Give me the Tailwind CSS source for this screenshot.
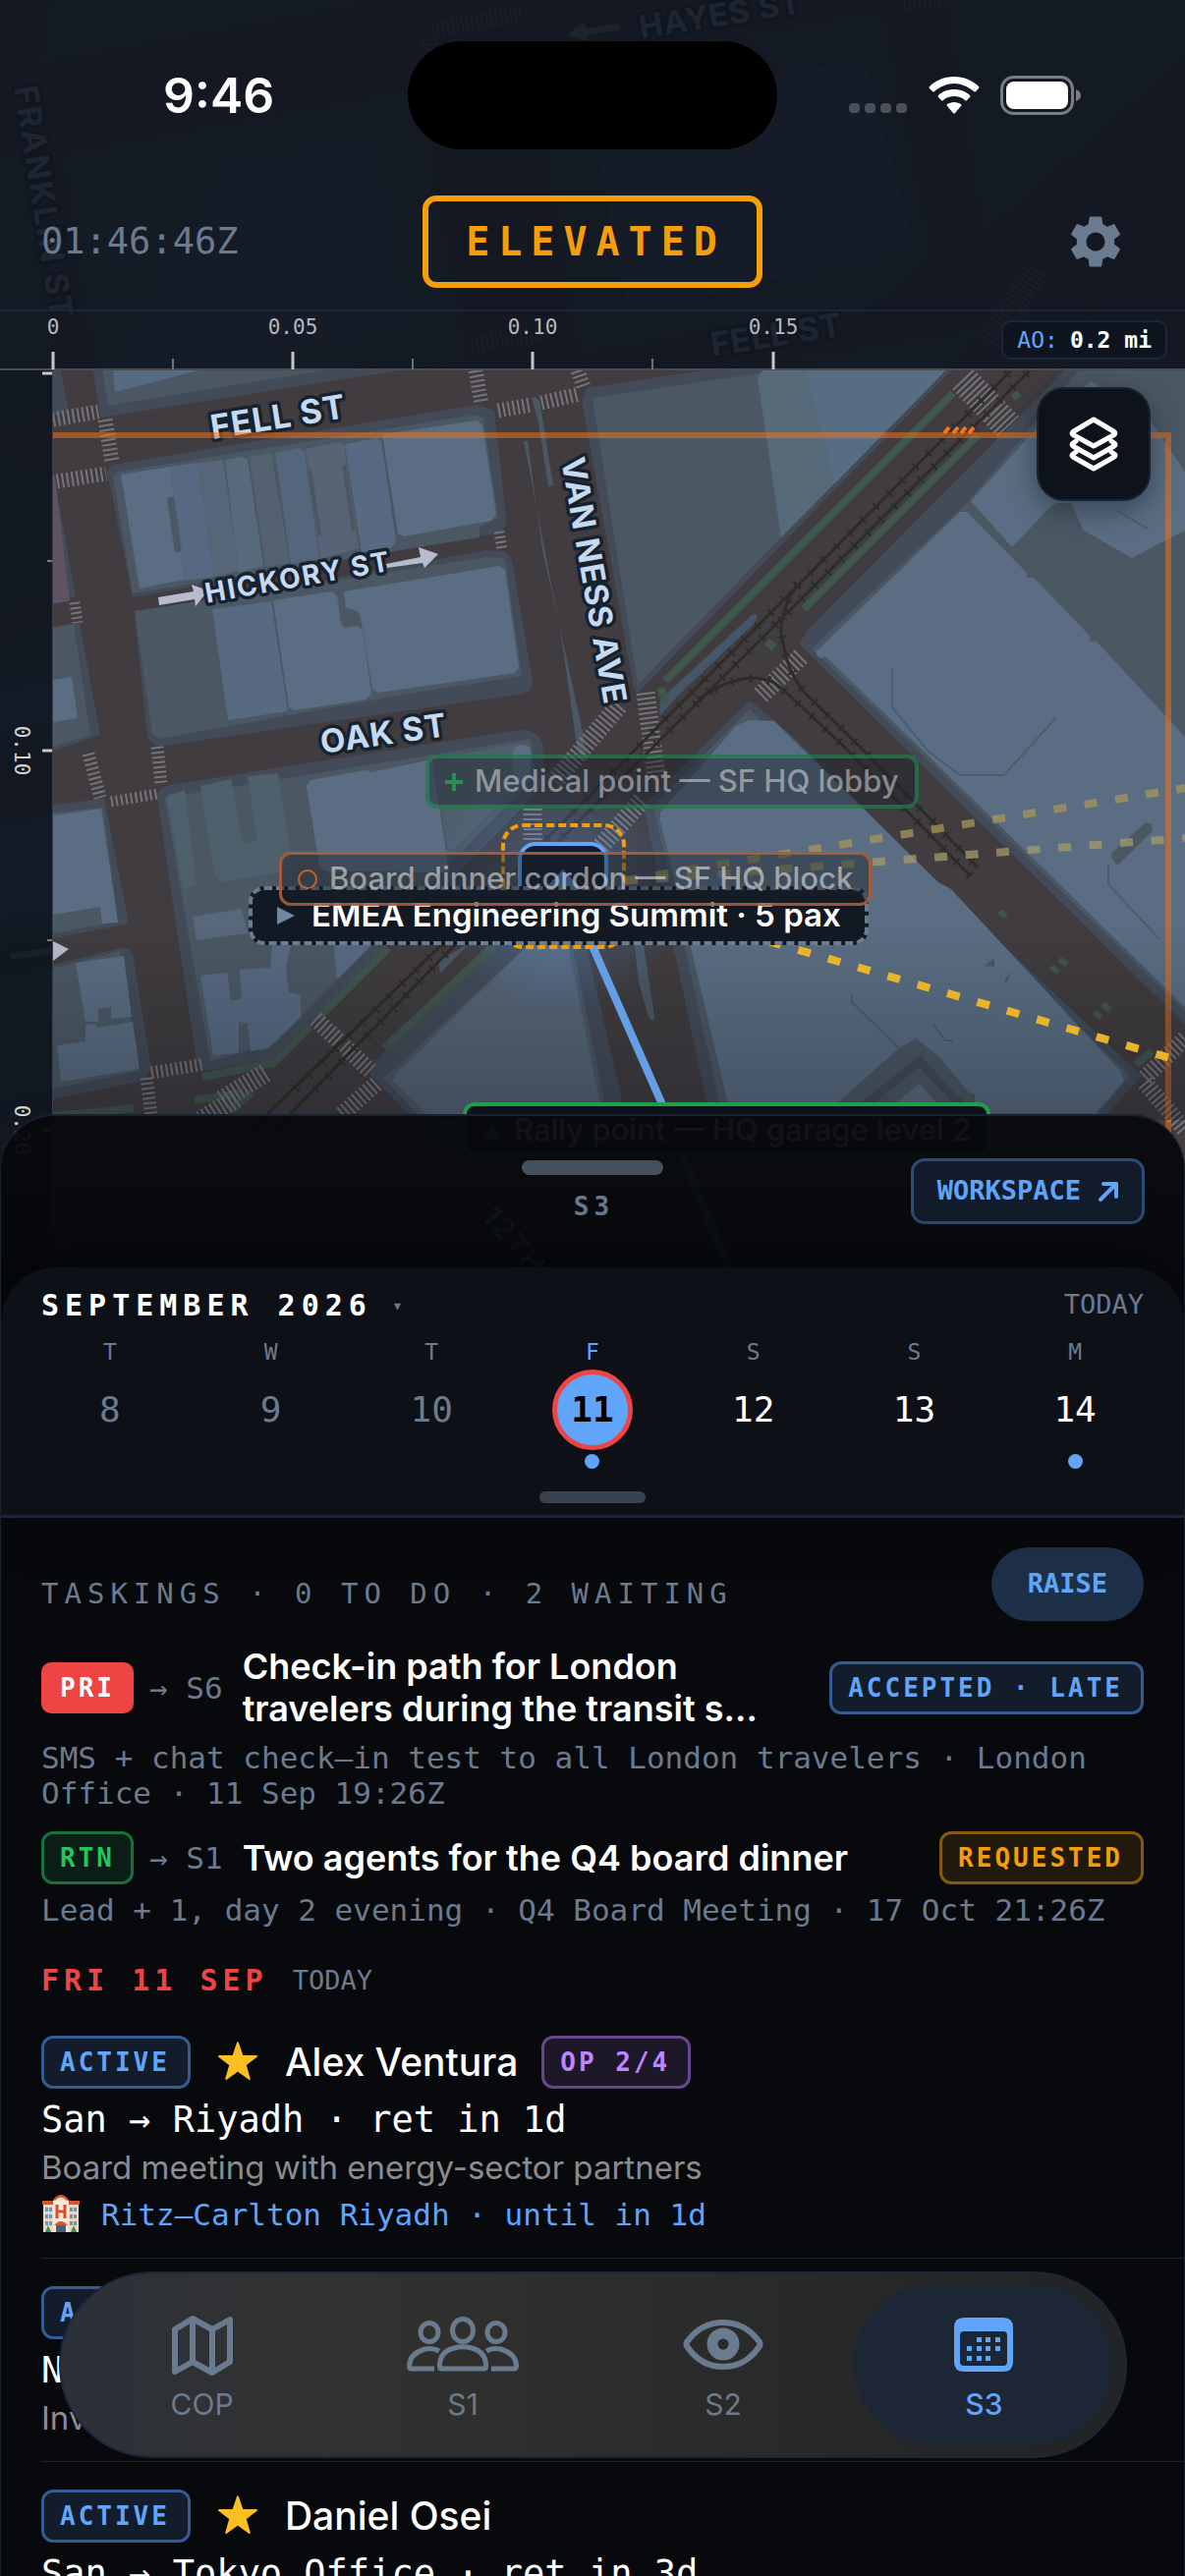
<!DOCTYPE html>
<html lang="en">
<head>
    <meta charset="UTF-8">
    <meta name="viewport" content="width=device-width, initial-scale=1.0">
    <title>S3 Taskings</title>
    <script src="https://cdn.jsdelivr.net/npm/@tailwindcss/browser@4"></script>
</head>
<body class="relative flex h-screen flex-col overflow-hidden bg-[#07090d] font-['Inter',sans-serif] text-white">

    <!-- Map canvas, runs behind the header and the sheet -->
    <div class="absolute inset-x-0 top-0 h-[1310px] overflow-hidden bg-[#403c3f]">
        <svg class="h-full w-full" viewBox="0 0 1206 1310" preserveAspectRatio="xMinYMin slice">
            <defs>
                <linearGradient id="fade" x1="0" y1="0" x2="0" y2="1">
                    <stop offset="0" stop-color="#0b1017" stop-opacity="0"/>
                    <stop offset="1" stop-color="#0b1017" stop-opacity=".28"/>
                </linearGradient>
                <radialGradient id="glow">
                    <stop offset="0" stop-color="#60a5fa" stop-opacity=".35"/>
                    <stop offset="1" stop-color="#60a5fa" stop-opacity="0"/>
                </radialGradient>
            </defs>
            <rect width="1206" height="1310" fill="#403c3f"/>

            <!-- Sidewalks -->
            <g fill="#434b58">
                <path d="M50 0H400L40 66Z"/>
                <path d="M62 155L430 88L476 366L102 425Z"/>
                <path d="M540 75L900 8L950 260L900 308L588 362Z"/>
                <path d="M960 0H1206V60L1000 240Z"/>
                <path d="M0 160L20 157L70 420L0 432Z"/>
                <path d="M0 465L54 478L77 608L0 622Z"/>
                <path d="M0 648L81 634L102 748L0 783Z"/>
                <path d="M0 824L81 816L106 812L131 940L0 966Z"/>
                <path d="M0 995L127 964L135 970L154 1088L146 1100L0 1130Z"/>
                <path d="M109 480L115 473L485 412L503 418L516 533L510 542L135 608Z"/>
                <path d="M137 625L496 560L514 561L521 570L542 693Q542 706 527 707L158 760L150 750Z"/>
                <path d="M597 395L1003 333L968 377L649 705L645 700L592 408Z"/>
                <path d="M160 812Q160 802 172 799L528 743Q548 743 552 757L556 797L280 1078L208 1090L200 1080Z"/>
                <path d="M1084 377H1206V1043L905 746L813 655L825 638Z"/>
                <path d="M763 713L810 752L955 900L1162 1095L1125 1136H722L655 820Z"/>
                <path d="M540 930L377 1085V1094L450 1170H645L590 935Z"/>
            </g>
            <!-- Blocks -->
            <g fill="#4b5864">
                <path d="M72 163L420 100L464 355L110 413Z"/>
                <path d="M0 648L75 635L92 748L0 778Z"/>
                <path d="M0 832L105 822L120 938L0 960Z"/>
                <path d="M0 1000L122 968L142 1090L0 1120Z"/>
                <path d="M115 485L121 480L484 422L492 426L507 527L488 536V547L135 604Z"/>
                <path d="M137 622L496 567L514 569L531 688L411 707L162 752L155 748Z"/>
                <path d="M603 405L975 350L960 377L649 697Z"/>
                <path d="M168 812L540 752L545 790L280 1062L214 1080Z"/>
                <path d="M1098 377H1206V1030L920 750L826 660L984 512Z"/>
                <path d="M550 950L390 1098L460 1170H625L580 950Z"/>
                <path d="M763 722L1150 1095L1115 1136H735L665 820Z"/>
            </g>
            <path d="M0 485H56L71 612L0 622Z" fill="#5f5262"/>
            <!-- Buildings -->
            <g fill="#5a6d82">
                <path d="M115 377L240 160L380 150L410 330L300 352L117 399Z" fill="#546b83"/>
                <path d="M600 110L880 60L930 250L640 320Z" fill="#546b83"/>
                <path d="M123 483L173 475L188 590L142 599Z"/>
                <path d="M173 475L201 471L218 587L188 591Z" fill="#576883"/>
                <path d="M201 471L227 468L243 581L218 587Z" fill="#576579"/>
                <path d="M229 468L247 465L252 468L268 576L243 583Z" fill="#576a7b"/>
                <path d="M254 465L276 461L295 573L270 577Z" fill="#536170"/>
                <path d="M280 461L305 456L310 460L325 569L296 574Z" fill="#54667c"/>
                <path d="M311 457L345 450L350 453L365 558L326 569Z" fill="#586475"/>
                <path d="M351 452L383 446L388 450L403 551L398 558L368 562Z" fill="#586a83"/>
                <path d="M389 442L485 428L491 432L505 524L500 530L411 546L405 543Z"/>
                <path d="M216 620L276 612L293 724L232 733Z" fill="#586a82"/>
                <path d="M278 611L338 602L343 606L347 634L350 639L364 637L369 641L378 706L372 712L300 723L294 720Z"/>
                <path d="M350 602L508 576L514 580L528 680L523 685L385 705L379 701L369 641L366 624L360 621L352 618Z"/>
                <path d="M771 384L776 377H962L950 390L795 547Z" fill="#576a7a"/>
                <path d="M820 377H962L850 492Z" fill="#55708b" opacity=".6"/>
                <path d="M0 700L73 689L79 731L0 744Z"/>
                <path d="M0 838L103 823L120 939L104 940L102 923L60 930L0 936Z"/>
                <path d="M77 980L126 973L134 1035L113 1037V1025L100 1027V1040L87 1040Z"/>
                <path d="M58 1064L87 1060V1043L98 1042V1046L118 1043L135 1040L142 1088L62 1101Z"/>
                <path d="M170 810L188 804L200 900L186 905Z" fill="#4f606d"/>
                <path d="M204 800L235 793L247 858L262 855L252 790L283 787L298 885L226 898L218 890Z" fill="#4f606d"/>
                <path d="M312 800L316 794L372 784L378 786L440 773L457 888L331 887L325 882Z"/>
                <path d="M440 773L528 757L540 775L525 800L457 870Z" fill="#4f606d"/>
                <path d="M521 765Q530 752 540 762V785L530 798L522 792Z"/>
                <path d="M196 933L246 925L252 950L200 957Z" fill="#56687a"/>
                <path d="M204 993L231 990L235 1018L246 1017L244 987L275 985L277 963L296 962L291 985L294 1010L306 1013V1035L273 1067L255 1070L252 1042L243 1040L243 1072L217 1074Z" fill="#586a82"/>
                <path d="M339 955L385 955L343 997Z" fill="#586a82"/>
                <path d="M834 670L830 664L977 521H984L1045 583V588H1052L1109 647V653H1116L1206 750V1025L925 750L840 668Z"/>
                <path d="M988 510L1060 430L1110 388L1165 420L1206 480V540L1190 548L1152 568L1138 560L1103 540L1090 512H1075L1068 517L1030 557Z"/>
                <path d="M672 827L750 738L763 733L788 734L955 898L968 905L1140 1090L1144 1100L1115 1133H992V1113H987L955 1075L932 1057L915 1067L853 1122V1136H744L672 835Z"/>
                <path d="M545 955L403 1093L400 1100L470 1170H620L577 955Z" fill="#566577"/>
                <path d="M915 1120L936 1103L955 1125L958 1136H900Z"/>
            </g>
            <!-- Courtyards and medians -->
            <g fill="#4b5864">
                <path d="M170 507L177 505L185 561L178 563Z"/>
                <path d="M313 478L317 477L327 545L324 546Z"/>
                <path d="M348 474L352 473L362 539L358 541Z"/>
                <path d="M541 405Q548 402 550 412L563 494L558 495L548 430Z"/>
                <path d="M533 449H537L552 560L568 630L592 740L598 775L588 765L570 640Z"/>
                <path d="M645 955H654L666 1035Q664 1042 660 1035L650 1000Z"/>
                <path d="M1131 868L1165 838Q1174 836 1173 846L1138 880Q1131 878 1131 868Z"/>
                <path d="M1002 983L1012 975V984ZM1030 990L1023 1002V996Z"/>
            </g>
            <path d="M870 1133L936 1080L985 1133" fill="none" stroke="#434b58" stroke-width="9"/>
            <g fill="none" stroke="#4c5d70" stroke-width="2">
                <path d="M908 680V720L945 765L977 789L1022 789L1075 730"/>
                <path d="M867 1012V1020L915 1067M1128 880V900L1180 956M1137 520L1168 538"/>
                <path d="M950 1043L962 1059H970"/>
            </g>
            <path d="M671 725L672 712L765 626Q774 622 768 634L690 708L672 728Z" fill="#46566a"/>
            <path d="M446 978L478 960L466 972L448 991Z" fill="#4b5864"/>

            <!-- Bike lanes -->
            <g fill="none" stroke="#41554f" stroke-width="8">
                <path d="M970 400L677 693M995 443L818 620M395 965L325 1035M505 960L391 1067M780 653L788 659M1031 405L1037 400"/>
                <path d="M672 700L678 716"/>
                <path d="M206 1096L278 1082L315 1045M198 1120L248 1112M54 1136L136 1128M235 1130L256 1112"/>
                <path d="M1156 1084L1172 1070"/>
            </g>
            <g fill="none" stroke="#41554f" stroke-width="6">
                <path d="M1017 928L1024 933M1070 984L1077 990M1078 976L1086 982M1114 1030L1121 1036M1122 1022L1130 1028"/>
            </g>

            <!-- Crosswalks -->
            <g fill="none" stroke="#76757a" stroke-dasharray="2 3">
                <path stroke-width="15" d="M54 427L100 419M107 427L114 470M58 490L108 482M484 377L490 411M507 418L540 412M551 410L590 401M588 377L594 394"/>
                <path stroke-width="11" d="M76 613L79 634M508 541L511 560M113 816L160 808"/>
                <path stroke-width="13" d="M90 767L102 812M160 760L164 798M154 1092L208 1083M149 1097L154 1136"/>
                <path stroke-width="30" d="M980 386L1026 434"/>
                <path stroke-width="19" d="M815 668L774 708M630 718L565 795M657 705L668 790M653 815L611 862M542 823V856"/>
                <path stroke-width="17" d="M321 1037L377 1090M383 1103L346 1136M1206 1057L1165 1097M1165 1102L1206 1150"/>
                <path stroke-width="20" d="M270 1092L225 1120M240 1118L205 1140"/>
                <path stroke-width="17" d="M440 30L530 14M436 40L440 70M920 5L975 -5M480 350L560 338"/>
                <path stroke-width="26" d="M1055 275L1005 350"/>
            </g>

            <!-- Streetcar rails -->
            <g fill="none" stroke="#2e2c27" stroke-width="3">
                <path d="M1206 200L1026 380L451 960L240 1165M1206 219L1045 380L457 968L265 1165"/>
                <path d="M812 594C796 618 792 640 797 655C802 680 808 692 820 706L872 757L995 883"/>
                <path d="M711 712C740 690 775 682 795 700L857 758L988 892"/>
                <g stroke-width="9" stroke-dasharray="2 17">
                    <path d="M1026 380L451 960L290 1120M1045 380L457 968L310 1120"/>
                    <path d="M812 594C796 618 792 640 797 655C802 680 808 692 820 706L872 757L995 883"/>
                    <path d="M711 712C740 690 775 682 795 700L857 758L988 892"/>
                </g>
            </g>

            <!-- One-way arrows -->
            <g fill="#b6bccd">
                <path d="M161 608L197 602L195 595L212 601L199 617L198 610L162 616Z"/>
                <path d="M393 574L428 567L426 557L446 564L432 578L430 573L394 578Z"/>
                <path d="M10 970L54 964V958L70 966L54 978V971L12 977Z"/>
                <path d="M577 36L593 22L597 29L630 24L632 30L598 36L597 42Z"/>
            </g>

            <!-- Street names -->
            <g fill="#c5d9f0" stroke="#18222f" stroke-width="7" stroke-linejoin="round" paint-order="stroke" font-family="Inter, sans-serif" font-weight="700" text-anchor="middle">
                <text font-size="34" letter-spacing="1" transform="translate(285 436) rotate(-9)">FELL ST</text>
                <text font-size="28" letter-spacing="2" transform="translate(305 597) rotate(-10)">HICKORY ST</text>
                <text font-size="33" letter-spacing="1" transform="translate(392 758) rotate(-8)">OAK ST</text>
                <text font-size="33" letter-spacing="1" transform="translate(593 593) rotate(80)">VAN NESS AVE</text>
                <text font-size="32" letter-spacing="1" transform="translate(735 26) rotate(-9)">HAYES ST</text>
                <text font-size="33" letter-spacing="2" transform="translate(33 208) rotate(81)">FRANKLIN ST</text>
                <text font-size="33" letter-spacing="1" transform="translate(792 352) rotate(-9)">FELL ST</text>
                <text font-size="30" letter-spacing="2" transform="translate(515 1270) rotate(50)">12TH</text>
            </g>

            <!-- Area of operations and routes -->
            <path d="M0 443H1189V1200" fill="none" stroke="#f97316" stroke-opacity=".5" stroke-width="6"/>
            <path d="M961 441l5-6M970 441l5-6M978 441l5-6M986 441l5-6" stroke="#f97316" stroke-width="4"/>
            <circle cx="573" cy="900" r="130" fill="url(#glow)"/>
            <rect y="940" width="1206" height="200" fill="url(#fade)"/>
            <g fill="none" stroke-width="8" stroke-dasharray="13 18.6">
                <path d="M636 896L1206 802" stroke="#a59658" stroke-opacity=".75"/>
                <path d="M636 897L1206 853" stroke="#a59a6c" stroke-opacity=".75"/>
                <path d="M600 905L1191 1077" stroke="#eab32c"/>
            </g>
            <path d="M573 895L673 1122L745 1300" stroke="#649fe6" stroke-width="8"/>
        </svg>

        <!-- Left ruler -->
        <div class="absolute top-[377px] bottom-0 left-0 w-[54px] border-r border-[#3a424e] bg-[#0f151f]/94">
            <svg class="h-full w-full" viewBox="0 0 54 933" preserveAspectRatio="xMinYMin slice">
                <path d="M43 3H54M43 387H54M43 773H54" stroke="#c4c6c9" stroke-width="3"/>
                <path d="M48 194H54M48 580H54" stroke="#777b82" stroke-width="2"/>
                <g fill="#d0d2d5" font-family="DejaVu Sans Mono, monospace" font-size="21" text-anchor="middle">
                    <text transform="translate(15 387) rotate(90)">0.10</text>
                    <text transform="translate(15 773) rotate(90)">0.20</text>
                </g>
            </svg>
        </div>

        <!-- Pins -->
        <div class="absolute top-[838px] left-[510px] h-[128px] w-[127px] rounded-[22px] border-4 border-dashed border-[#f59e0b]"></div>
        <div class="absolute top-[857px] left-[527px] flex h-[92px] w-[92px] items-center justify-center rounded-[18px] border-4 border-[#60a5fa] bg-[#111c2b]">
            <svg class="size-10" viewBox="0 0 40 40"><path d="M20 2L37 20L20 38L3 20Z" fill="#4c7dbd"/></svg>
        </div>
        <div class="absolute top-[902px] left-[253px] flex h-[60px] items-center gap-4 rounded-[16px] border-4 border-dashed border-[#6b7c8f] bg-[#121922] px-6 text-[33px] font-semibold whitespace-nowrap">
            <svg class="h-5 w-5" viewBox="0 0 20 20"><path d="M1 1L19 10L1 19Z" fill="#7286a0"/></svg>
            EMEA Engineering Summit · 5 pax
        </div>
        <div class="absolute top-[867px] left-[284px] flex h-[55px] items-center gap-3 rounded-[12px] border-3 border-[#b4623a]/85 bg-[#1a212b]/45 px-4 text-[31px] font-medium whitespace-nowrap text-white/50">
            <svg class="size-5" viewBox="0 0 20 20"><circle cx="10" cy="10" r="9" fill="none" stroke="#c4622a" stroke-width="2"/></svg>
            Board dinner cordon — SF HQ block
        </div>
        <div class="absolute top-[768px] left-[433px] flex h-[55px] items-center gap-3 rounded-[12px] border-4 border-[#22a35a]/50 bg-[#1a212b]/45 px-4 text-[31px] font-medium whitespace-nowrap text-white/45">
            <svg class="size-[18px]" viewBox="0 0 18 18"><path d="M9 0V18M0 9H18" stroke="#2c8d57" stroke-width="4"/></svg>
            Medical point — SF HQ lobby
        </div>
        <div class="absolute top-[1122px] left-[471px] flex h-[56px] items-center gap-3 rounded-[12px] border-4 border-[#1f9e4c] bg-[#0d131b] px-4 text-[31px] font-medium whitespace-nowrap">
            <svg class="size-5" viewBox="0 0 20 20"><path d="M10 1L19 19H1Z" fill="#22c55e"/></svg>
            Rally point — HQ garage level 2
        </div>
    </div>

    <!-- Header -->
    <header class="relative h-[377px] shrink-0 border-b-2 border-[#4a4d52] bg-[#10161f]/92">
        <div class="grid grid-cols-[1fr_376px_1fr] items-center pt-[42px]">
            <div class="pl-[166px] text-[50px] leading-none font-semibold">9:46</div>
            <div class="h-[110px] rounded-full bg-black"></div>
            <div class="flex items-center justify-end gap-[21px] pr-[104px]">
                <svg class="mt-[26px] h-[10px] w-[60px]" viewBox="0 0 60 10" fill="#4a4f59"><rect width="11" height="10" rx="4"/><rect x="16" width="11" height="10" rx="4"/><rect x="32" width="11" height="10" rx="4"/><rect x="48" width="11" height="10" rx="4"/></svg>
                <svg class="h-[38px] w-[52px]" viewBox="0 0 52 38" fill="#fff">
                    <path d="M26 0C36 0 45 4 51 10Q52 11 51 12L48 15Q47 16 46 15C40 10 33 7 26 7S12 10 6 15Q5 16 4 15L1 12Q0 11 1 10C7 4 16 0 26 0Z"/>
                    <path d="M26 13C32 13 38 15 42 19Q43 20 42 21L39 24Q38 25 37 24C34 21 30 20 26 20S18 21 15 24Q14 25 13 24L10 21Q9 20 10 19C14 15 20 13 26 13Z"/>
                    <path d="M26 26C29 26 31 27 33 28Q34 29 33 30L27 37Q26 38 25 37L19 30Q18 29 19 28C21 27 23 26 26 26Z"/>
                </svg>
                <svg class="h-10 w-[84px]" viewBox="0 0 84 40">
                    <rect x="1.5" y="1.5" width="72" height="37" rx="12" fill="none" stroke="#787c83" stroke-width="3"/>
                    <rect x="6" y="6" width="63" height="28" rx="8" fill="#fff"/>
                    <path d="M77 14Q82 16 82 20T77 26Z" fill="#787c83"/>
                </svg>
            </div>
        </div>
        <div class="mt-[47px] grid h-[94px] grid-cols-[1fr_auto_1fr] items-center px-[42px]">
            <time class="font-['DejaVu_Sans_Mono',monospace] text-[37px] text-[#6b7b8f]">01:46:46Z</time>
            <button class="h-[94px] rounded-[14px] border-6 border-[#f59e0b] pr-[31px] pl-[38px] font-['DejaVu_Sans_Mono',monospace] text-[40px] font-bold tracking-[9px] text-[#f59e0b]">ELEVATED</button>
            <button class="justify-self-end pr-[17px]" aria-label="Settings">
                <svg class="size-[64px]" viewBox="0 0 24 24" fill="#6b7b8f"><path d="M19.14 12.94c.04-.3.06-.61.06-.94s-.02-.64-.07-.94l2.03-1.58a.49.49 0 0 0 .12-.61l-1.92-3.32a.488.488 0 0 0-.59-.22l-2.39.96a7.03 7.03 0 0 0-1.62-.94l-.36-2.54a.484.484 0 0 0-.48-.41h-3.84a.47.47 0 0 0-.47.41l-.36 2.54c-.59.24-1.13.57-1.62.94l-2.39-.96a.47.47 0 0 0-.59.22L2.74 8.87a.47.47 0 0 0 .12.61l2.03 1.58c-.05.3-.09.63-.09.94s.02.64.07.94l-2.03 1.58a.49.49 0 0 0-.12.61l1.92 3.32c.12.22.37.29.59.22l2.39-.96c.5.38 1.03.7 1.62.94l.36 2.54c.05.24.24.41.48.41h3.84c.24 0 .44-.17.47-.41l.36-2.54a6.9 6.9 0 0 0 1.62-.94l2.39.96c.22.08.47 0 .59-.22l1.92-3.32a.47.47 0 0 0-.12-.61l-2.01-1.58zM12 15.6a3.6 3.6 0 1 1 0-7.2 3.6 3.6 0 0 1 0 7.2z"/></svg>
            </button>
        </div>
        <!-- Top ruler -->
        <div class="mt-[22px] flex h-[60px] items-center justify-between border-t-2 border-[#1c2637] pr-[18px]">
            <svg class="h-[60px] w-[900px] shrink-0" viewBox="0 0 900 60">
                <path d="M54 42V60M298 42V60M542 42V60M787 42V60" stroke="#c4c6c9" stroke-width="3"/>
                <path d="M176 49V60M420 49V60M664 49V60" stroke="#6f7278" stroke-width="2"/>
                <g fill="#b5b8bc" font-family="DejaVu Sans Mono, monospace" font-size="21" text-anchor="middle">
                    <text x="54" y="24">0</text>
                    <text x="298" y="24">0.05</text>
                    <text x="542" y="24">0.10</text>
                    <text x="787" y="24">0.15</text>
                </g>
            </svg>
            <div class="flex h-10 items-center gap-3 rounded-[10px] border-2 border-[#1b2636] bg-[#0f151f] px-3.5 font-['DejaVu_Sans_Mono',monospace] text-[23px] whitespace-nowrap">
                <span class="text-[#60a5fa]">AO:</span><span class="font-bold">0.2 mi</span>
            </div>
        </div>
    </header>

    <div class="relative flex h-[757px] shrink-0 items-start justify-end pt-[17px] pr-[35px]">
        <button class="flex size-[116px] items-center justify-center rounded-[28px] border-2 border-[#172233] bg-[#0e131b] shadow-[0_8px_30px_rgba(0,0,0,.4)]" aria-label="Layers">
            <svg class="h-[56px] w-[50px]" viewBox="0 0 50 56" fill="none" stroke="#fff" stroke-width="5" stroke-linejoin="round" stroke-linecap="round">
                <path d="M25 3L46 15.5Q47.5 17 46 18.5L25 30L4 18.5Q2.5 17 4 15.5Z"/>
                <path d="M7 25L3.5 27.5Q2.5 29 4 30L25 42L46 30Q47.5 29 46.5 27.5L43 25"/>
                <path d="M7 36L3.5 38.5Q2.5 40 4 41L25 53L46 41Q47.5 40 46.5 38.5L43 36"/>
            </svg>
        </button>
    </div>

    <!-- Sheet -->
    <main class="relative flex min-h-0 flex-1 flex-col overflow-hidden rounded-t-[56px] border-x border-t-2 border-[#182130] bg-[#07090d]/96">
        <div class="relative flex h-[154px] shrink-0 flex-col items-center pt-[45px]">
            <div class="h-[15px] w-36 rounded-full bg-[#45505d]"></div>
            <h1 class="mt-3.5 pl-[3px] font-['DejaVu_Sans_Mono',monospace] text-[26px] leading-9 font-bold tracking-[5px] text-[#6b7b8f]">S3</h1>
            <a href="#workspace" class="absolute top-[43px] right-[40px] flex h-[67px] items-center gap-[18px] rounded-[14px] border-3 border-[#2c4c78] bg-[#131c2a] px-6 font-['DejaVu_Sans_Mono',monospace] text-[27px] font-bold text-[#60a5fa]">
                WORKSPACE
                <svg class="size-5" viewBox="0 0 20 20" fill="none" stroke="#60a5fa" stroke-width="4" stroke-linecap="round" stroke-linejoin="round"><path d="M2 18L18 2M5 2H18V15"/></svg>
            </a>
        </div>

        <!-- Week calendar -->
        <section class="relative shrink-0 rounded-t-[56px] border-b-3 border-[#1c2637] bg-[#0d1117] shadow-[0_-10px_60px_rgba(0,0,0,.6)]">
            <div class="flex h-[72px] items-center justify-between px-[41px] pt-1 font-['DejaVu_Sans_Mono',monospace]">
                <button class="flex items-center gap-5 text-[30px] font-bold tracking-[6px]">SEPTEMBER 2026 <span class="text-[18px] text-[#6b7b8f]">▾</span></button>
                <button class="text-[27px] text-[#6b7b8f]">TODAY</button>
            </div>
            <div class="grid grid-cols-7 px-[29px] text-center font-['DejaVu_Sans_Mono',monospace] text-[#6b7b8f]">
                <button class="flex flex-col items-center"><span class="text-[23px] leading-7">T</span><span class="mt-1 flex size-[82px] items-center justify-center text-[36px]">8</span></button>
                <button class="flex flex-col items-center"><span class="text-[23px] leading-7">W</span><span class="mt-1 flex size-[82px] items-center justify-center text-[36px]">9</span></button>
                <button class="flex flex-col items-center"><span class="text-[23px] leading-7">T</span><span class="mt-1 flex size-[82px] items-center justify-center text-[36px]">10</span></button>
                <button class="flex flex-col items-center"><span class="text-[23px] leading-7 text-[#60a5fa]">F</span><span class="mt-1 flex size-[82px] items-center justify-center rounded-full border-5 border-[#ef4444] bg-[#60a5fa] text-[36px] font-bold text-black">11</span><i class="mt-1 size-[15px] rounded-full bg-[#60a5fa]"></i></button>
                <button class="flex flex-col items-center"><span class="text-[23px] leading-7">S</span><span class="mt-1 flex size-[82px] items-center justify-center text-[36px] text-white">12</span></button>
                <button class="flex flex-col items-center"><span class="text-[23px] leading-7">S</span><span class="mt-1 flex size-[82px] items-center justify-center text-[36px] text-white">13</span></button>
                <button class="flex flex-col items-center"><span class="text-[23px] leading-7">M</span><span class="mt-1 flex size-[82px] items-center justify-center text-[36px] text-white">14</span><i class="mt-1 size-[15px] rounded-full bg-[#60a5fa]"></i></button>
            </div>
            <div class="mx-auto mt-[23px] mb-3 h-3 w-[108px] rounded-full bg-[#38434f]"></div>
        </section>

        <div class="min-h-0 flex-1 overflow-hidden bg-[#07090d]">
            <!-- Taskings -->
            <section class="px-[41px] pt-[30px]">
                <div class="flex h-[75px] items-center justify-between">
                    <h2 class="pt-5 font-['DejaVu_Sans_Mono',monospace] text-[29px] tracking-[6px] text-[#6b7b8f]">TASKINGS · 0 TO DO · 2 WAITING</h2>
                    <button class="h-[75px] rounded-full bg-[#1e3048] px-[37px] font-['DejaVu_Sans_Mono',monospace] text-[27px] font-bold text-[#60a5fa]">RAISE</button>
                </div>
                <article class="mt-[25px]">
                    <div class="flex items-center">
                        <span class="flex h-[52px] items-center rounded-[10px] bg-[#ef4444] px-[19px] font-['DejaVu_Sans_Mono',monospace] text-[26px] font-bold tracking-[3px]">PRI</span>
                        <span class="ml-4 font-['DejaVu_Sans_Mono',monospace] text-[31px] whitespace-nowrap text-[#6b7b8f]">→ S6</span>
                        <h3 class="ml-5 min-w-0 flex-1 text-[36px] leading-[43px] font-semibold">Check-in path for London<br>travelers during the transit s…</h3>
                        <span class="flex h-[54px] items-center rounded-[12px] border-3 border-[#345c93] bg-[#131c2a] pr-[18px] pl-4 font-['DejaVu_Sans_Mono',monospace] text-[26px] font-bold tracking-[3px] whitespace-nowrap text-[#60a5fa]">ACCEPTED · LATE</span>
                    </div>
                    <p class="mt-2.5 font-['DejaVu_Sans_Mono',monospace] text-[31px] leading-9 text-[#6b7b8f]">SMS + chat check–in test to all London travelers · London Office · 11 Sep 19:26Z</p>
                </article>
                <article class="mt-[21px]">
                    <div class="flex items-center">
                        <span class="flex h-[54px] items-center rounded-[12px] border-3 border-[#17703b] bg-[#0b1d17] px-4 font-['DejaVu_Sans_Mono',monospace] text-[26px] font-bold tracking-[3px] text-[#22c55e]">RTN</span>
                        <span class="ml-4 font-['DejaVu_Sans_Mono',monospace] text-[31px] whitespace-nowrap text-[#6b7b8f]">→ S1</span>
                        <h3 class="ml-5 min-w-0 flex-1 text-[36px] leading-[43px] font-semibold">Two agents for the Q4 board dinner</h3>
                        <span class="flex h-[54px] items-center rounded-[12px] border-3 border-[#85590f] bg-[#22190d] pr-[18px] pl-4 font-['DejaVu_Sans_Mono',monospace] text-[26px] font-bold tracking-[3px] text-[#f59e0b]">REQUESTED</span>
                    </div>
                    <p class="mt-2 font-['DejaVu_Sans_Mono',monospace] text-[31px] leading-9 whitespace-nowrap text-[#6b7b8f]">Lead + 1, day 2 evening · Q4 Board Meeting · 17 Oct 21:26Z</p>
                </article>
            </section>

            <!-- Travel -->
            <section class="pt-9 pl-[41px]">
                <h2 class="mb-2.5 flex items-center gap-[25px] font-['DejaVu_Sans_Mono',monospace] leading-9"><span class="text-[30px] font-bold tracking-[5px] text-[#ef4444]">FRI 11 SEP</span><span class="text-[27px] text-[#6b7b8f]">TODAY</span></h2>
                <article class="border-b border-[#1d2230] pt-7 pb-[22px]">
                    <div class="flex items-center">
                        <span class="flex h-[54px] items-center rounded-[12px] border-3 border-[#345c93] bg-[#131c2a] pr-[18px] pl-4 font-['DejaVu_Sans_Mono',monospace] text-[26px] font-bold tracking-[3px] text-[#60a5fa]">ACTIVE</span>
                        <svg class="ml-6 size-12" viewBox="0 0 24 24" fill="#fbbf24" stroke="#fbbf24" stroke-linejoin="round"><path d="M12 2.2L14.3 9H21.5L15.8 13.3L17.9 20.5L12 16.2L6.1 20.5L8.2 13.3L2.5 9H9.7Z"/></svg>
                        <h3 class="mr-6 ml-6 text-[39px] leading-[54px] font-medium">Alex Ventura</h3>
                        <span class="flex h-[54px] items-center rounded-[12px] border-3 border-[#67468f] bg-[#1c1729] pr-[18px] pl-4 font-['DejaVu_Sans_Mono',monospace] text-[26px] font-bold tracking-[3px] text-[#c084fc]">OP 2/4</span>
                    </div>
                    <p class="mt-2.5 font-['DejaVu_Sans_Mono',monospace] text-[37px] leading-11">San → Riyadh · ret in 1d</p>
                    <p class="mt-1 text-[33px] leading-11 text-[#8b8c90]">Board meeting with energy-sector partners</p>
                    <p class="mt-1 flex items-center gap-[21px] font-['DejaVu_Sans_Mono',monospace] text-[31px] leading-11 text-[#60a5fa]">
                        <svg class="h-10 w-[40px]" viewBox="0 0 40 40">
                            <path d="M2 10H38V38H2Z" fill="#e9d6c3"/>
                            <path d="M12 6Q20 -4 28 6V38H12Z" fill="#f7ead9"/>
                            <path d="M1 6H12V10H1ZM28 6H39V10H28ZM12 5Q20 -5 28 5L26 6Q20 -1 14 6Z" fill="#d9532f"/>
                            <path d="M4 13h3v4H4zM8 13h3v4H8zM4 20h3v4H4zM8 20h3v4H8zM4 27h3v4H4zM8 27h3v4H8zM29 13h3v4h-3zM33 13h3v4h-3zM29 20h3v4h-3zM33 20h3v4h-3zM29 27h3v4h-3zM33 27h3v4h-3z" fill="#6d93b8"/>
                            <path d="M16 10V24M24 10V24M16 17H24" stroke="#e0492c" stroke-width="3"/>
                            <path d="M13 31Q20 23 27 31Z" fill="#d9532f"/>
                            <path d="M15 31H25V38H15Z" fill="#41617f"/>
                            <path d="M4 38l3-7 3 7zM30 38l3-7 3 7z" fill="#3f8f4a"/>
                        </svg>
                        Ritz–Carlton Riyadh · until in 1d
                    </p>
                </article>
                <article class="border-b border-[#1d2230] pt-7 pb-[22px]">
                    <div class="flex items-center">
                        <span class="flex h-[54px] items-center rounded-[12px] border-3 border-[#345c93] bg-[#131c2a] pr-[18px] pl-4 font-['DejaVu_Sans_Mono',monospace] text-[26px] font-bold tracking-[3px] text-[#60a5fa]">ACTIVE</span>
                    </div>
                    <p class="mt-2.5 font-['DejaVu_Sans_Mono',monospace] text-[37px] leading-11">N</p>
                    <p class="mt-1 text-[33px] leading-11 text-[#8b8c90]">Inv</p>
                </article>
                <article class="pt-7">
                    <div class="flex items-center">
                        <span class="flex h-[54px] items-center rounded-[12px] border-3 border-[#345c93] bg-[#131c2a] pr-[18px] pl-4 font-['DejaVu_Sans_Mono',monospace] text-[26px] font-bold tracking-[3px] text-[#60a5fa]">ACTIVE</span>
                        <svg class="ml-6 size-12" viewBox="0 0 24 24" fill="#fbbf24" stroke="#fbbf24" stroke-linejoin="round"><path d="M12 2.2L14.3 9H21.5L15.8 13.3L17.9 20.5L12 16.2L6.1 20.5L8.2 13.3L2.5 9H9.7Z"/></svg>
                        <h3 class="ml-6 text-[39px] leading-[54px] font-medium">Daniel Osei</h3>
                    </div>
                    <p class="mt-2.5 font-['DejaVu_Sans_Mono',monospace] text-[37px] leading-11">San → Tokyo Office · ret in 3d</p>
                </article>
            </section>
        </div>
    </main>

    <!-- Tab bar -->
    <nav class="absolute right-[59px] bottom-[120px] left-[60px] grid h-[190px] grid-cols-4 rounded-full border-2 border-[#1c2839] bg-linear-to-r from-[#2c3039] via-[#323231] via-25% to-[#222324] p-[11px] text-[30px] text-[#6b7b8f]">
        <a href="#cop" class="flex flex-col items-center pt-[30px]">
            <svg class="h-[64px] w-[64px]" viewBox="0 0 64 64" fill="none" stroke="#6b7b8f" stroke-width="6" stroke-linejoin="round"><path d="M4 16L22 5L42 16L60 6V49L42 60L22 49L4 59ZM22 5V49M42 16V60"/></svg>
            <span class="mt-1.5 leading-11">COP</span>
        </a>
        <a href="#s1" class="flex flex-col items-center pt-[30px]">
            <svg class="h-[64px] w-[114px]" viewBox="0 0 114 64" fill="none" stroke="#6b7b8f" stroke-width="5" stroke-linejoin="round">
                <ellipse cx="57" cy="17" rx="10.5" ry="11.5"/><path d="M33.5 54Q33 39 48 35Q57 32.5 66 35Q81 39 80.5 54Q80.5 56 78 56H36Q33.5 56 33.5 54Z"/>
                <ellipse cx="23" cy="19" rx="9" ry="9.5"/><path d="M33 38Q26 34 17 36.5Q3 41 2.5 53Q2.5 56 5 56H28"/>
                <ellipse cx="91" cy="19" rx="9" ry="9.5"/><path d="M81 38Q88 34 97 36.5Q111 41 111.5 53Q111.5 56 109 56H86"/>
            </svg>
            <span class="mt-1.5 leading-11">S1</span>
        </a>
        <a href="#s2" class="flex flex-col items-center pt-[30px]">
            <svg class="h-[64px] w-[82px]" viewBox="0 0 82 64"><path d="M4 33Q3 31 4 29Q18 9 41 9T78 29Q79 31 78 33Q64 54 41 54T4 33Z" fill="none" stroke="#6b7b8f" stroke-width="6"/><circle cx="41" cy="31" r="11" fill="none" stroke="#6b7b8f" stroke-width="11"/></svg>
            <span class="mt-1.5 leading-11">S2</span>
        </a>
        <a href="#s3" class="flex flex-col items-center rounded-full bg-[#1d2635] pt-[30px] font-medium text-[#60a5fa]">
            <svg class="h-[64px] w-[60px]" viewBox="0 0 60 64" fill="#60a5fa">
                <path fill-rule="evenodd" d="M10 4H50Q60 4 60 14V49Q60 59 50 59H10Q0 59 0 49V14Q0 4 10 4ZM10 18Q6 18 6 22V49Q6 53 10 53H50Q54 53 54 49V22Q54 18 50 18Z"/>
                <path d="M23 24h5v5h-5zM32 24h5v5h-5zM42 24h5v5h-5zM13 33h5v5h-5zM23 33h5v5h-5zM32 33h5v5h-5zM42 33h5v5h-5zM13 43h5v5h-5zM23 43h5v5h-5zM32 43h5v5h-5z"/>
            </svg>
            <span class="mt-1.5 leading-11">S3</span>
        </a>
    </nav>
</body>
</html>
